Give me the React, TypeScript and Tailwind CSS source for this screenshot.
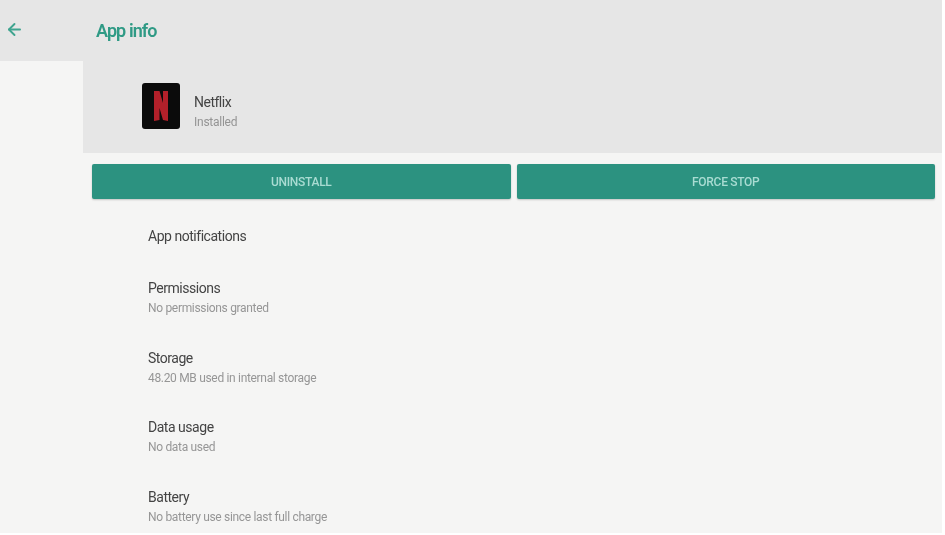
import React from 'react';
import { ArrowLeft } from 'lucide-react';

const rows = [
  { title: 'Permissions', sub: 'No permissions granted' },
  { title: 'Storage', sub: '48.20 MB used in internal storage' },
  { title: 'Data usage', sub: 'No data used' },
  { title: 'Battery', sub: 'No battery use since last full charge' },
];

export default function App() {
  return (
    <div className="w-[945px] h-[535px] overflow-hidden bg-white font-['Roboto',sans-serif]">
      <div className="w-[942px] h-[533px] overflow-hidden bg-[#f5f5f4] blur-[0.5px]">
        {/* Header */}
        <div className="h-[61px] bg-[#e6e6e6] flex items-center">
          <div className="w-[83px] pl-[5px] pb-[2px]">
            <ArrowLeft size={19} strokeWidth={2.4} className="text-[#3fa48f]" />
          </div>
          <h1 className="ml-[13px] mt-[1px] text-[18px] tracking-[-0.9px] font-semibold leading-none text-[#2f9a85]">App info</h1>
        </div>

        <div className="flex">
          <div className="w-[83px] shrink-0" />
          <div className="flex-1">
            {/* App summary */}
            <div className="h-[92px] bg-[#e6e6e6] flex items-start pl-[59px] pt-[22px]">
              <div className="w-[38px] h-[46px] rounded-[3px] bg-[#0b0b0b] flex items-center justify-center">
                <svg width="14" height="30" viewBox="0 0 14 30">
                  <path d="M0 0h5.5L9 12V0H14v30l-5-1L5.5 17v12L0 30z" fill="#b3202a" />
                </svg>
              </div>
              <div className="ml-[14px] pt-[10px]">
                <div className="text-[14px] tracking-[-0.5px] leading-[18px] text-[#444444]">Netflix</div>
                <div className="text-[12px] tracking-[-0.25px] leading-[18px] mt-[2px] text-[#949494]">Installed</div>
              </div>
            </div>

            {/* Buttons */}
            <div className="flex gap-[6px] pl-[9px] pr-[7px] pt-[11px]">
              <button className="flex-1 h-[35px] rounded-[2px] bg-[#2c9280] text-[12px] tracking-[-0.3px] font-medium text-[#a9dcd2] shadow-[0_1px_2px_rgba(0,0,0,0.2)]">UNINSTALL</button>
              <button className="flex-1 h-[35px] rounded-[2px] bg-[#2c9280] text-[12px] tracking-[-0.3px] font-medium text-[#a9dcd2] shadow-[0_1px_2px_rgba(0,0,0,0.2)]">FORCE STOP</button>
            </div>

            {/* Settings list */}
            <div className="pl-[65px] pt-[27px]">
              <div className="text-[14px] tracking-[-0.47px] leading-[20px] text-[#444444]">App notifications</div>
              <div className="mt-[32px] flex flex-col gap-[29.5px]">
                {rows.map((r) => (
                  <div key={r.title} className="h-[40px]">
                    <div className="text-[14px] tracking-[-0.47px] leading-[20px] text-[#444444]">{r.title}</div>
                    <div className="text-[12px] tracking-[-0.32px] leading-[20px] text-[#969696]">{r.sub}</div>
                  </div>
                ))}
              </div>
            </div>
          </div>
        </div>
      </div>
    </div>
  );
}
